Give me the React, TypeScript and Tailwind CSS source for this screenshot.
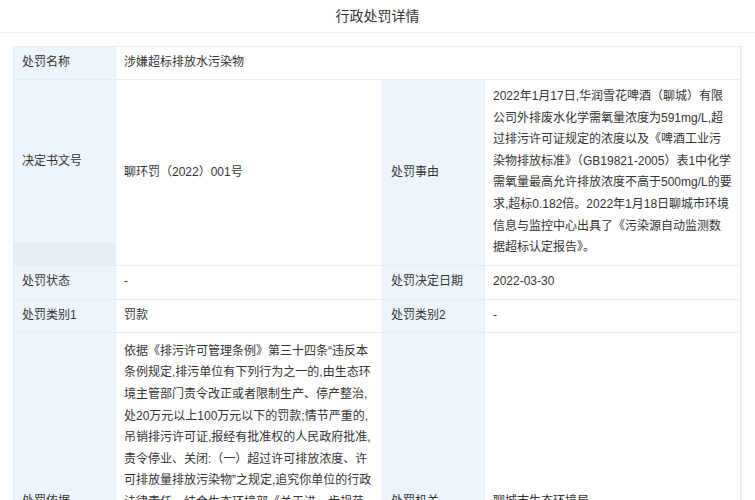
export default function App() {
  const L = 'bg-[#eef4fc] px-[8px] flex items-center';
  const V = 'bg-white px-[8px] flex items-center';
  return (
    <div className="w-[755px] h-[500px] overflow-hidden bg-white text-[12px] text-[#333]" style={{ fontFamily: '"Liberation Sans", "Noto Sans CJK SC", sans-serif' }}>
      <div className="h-[33px] flex items-center justify-center text-[14px] text-[#333] border-b border-[#f0f0f0]">行政处罚详情</div>
      <div className="px-[13px] pt-[13px]">
        <div className="grid grid-cols-[101px_266px_101px_255px] gap-[1px] bg-[#e6edf5] border border-[#e6edf5] leading-[21.6px] w-[729px]">
          <div className={`${L} h-[32px]`}>处罚名称</div>
          <div className={`${V} col-span-3`}>涉嫌超标排放水污染物</div>

          <div className={`${L} h-[163px]`}>决定书文号</div>
          <div className={V}>聊环罚（2022）001号</div>
          <div className={L}>处罚事由</div>
          <div className={`${V} py-[6px]`}>2022年1月17日,华润雪花啤酒（聊城）有限公司外排废水化学需氧量浓度为591mg/L,超过排污许可证规定的浓度以及《啤酒工业污染物排放标准》（GB19821-2005）表1中化学需氧量最高允许排放浓度不高于500mg/L的要求,超标0.182倍。2022年1月18日聊城市环境信息与监控中心出具了《污染源自动监测数据超标认定报告》。</div>

          <div className={`${L} h-[33px]`}>处罚状态</div>
          <div className={V}>-</div>
          <div className={L}>处罚决定日期</div>
          <div className={V}>2022-03-30</div>

          <div className={`${L} h-[32px]`}>处罚类别1</div>
          <div className={V}>罚款</div>
          <div className={L}>处罚类别2</div>
          <div className={V}>-</div>

          <div className={`${L} h-[360px] items-start pt-[158px]`}>处罚依据</div>
          <div className="bg-white px-[8px] pt-[8px]">依据《排污许可管理条例》第三十四条“违反本条例规定,排污单位有下列行为之一的,由生态环境主管部门责令改正或者限制生产、停产整治,处20万元以上100万元以下的罚款;情节严重的,吊销排污许可证,报经有批准权的人民政府批准,责令停业、关闭:（一）超过许可排放浓度、许可排放量排放污染物”之规定,追究你单位的行政法律责任。结合生态环境部《关于进一步规范适用环境行政处罚自由裁量权的指导意见》（环执法〔2019〕42号）和《山东省生态环境厅行政处罚裁量基准》相关规定,作出如下处罚决定。</div>
          <div className={`${L} items-start pt-[158px]`}>处罚机关</div>
          <div className="bg-white px-[8px] pt-[158px]">聊城市生态环境局</div>
        </div>
      </div>
    </div>
  );
}
